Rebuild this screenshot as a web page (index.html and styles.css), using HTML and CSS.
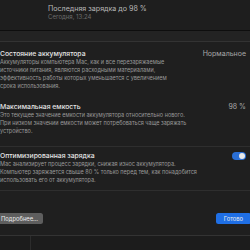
FILE: index.html
```html
<!DOCTYPE html>
<html lang="ru">
<head>
<meta charset="utf-8">
<link rel="stylesheet" href="styles.css">
</head>
<body>
<div class="page">
  <div class="behind-top">
    <div class="last-title">Последняя зарядка до 98 %</div>
    <div class="last-sub">Сегодня, 13:24</div>
  </div>
  <div class="sheet">
    <div class="sheet-head"></div>
    <div class="group">
      <div class="row row-first">
        <div class="row-text">
          <div class="row-title">Состояние аккумулятора</div>
          <div class="row-desc">Аккумуляторы компьютера Mac, как и все перезаряжаемые<br>источники питания, являются расходными материалами,<br>эффективность работы которых уменьшается с увеличением<br>срока использования.</div>
        </div>
        <div class="row-value">Нормальное</div>
      </div>
      <div class="row row-second">
        <div class="row-text">
          <div class="row-title">Максимальная емкость</div>
          <div class="row-desc">Это текущее значение емкости аккумулятора относительно нового.<br>При низком значении емкости может потребоваться чаще заряжать<br>устройство.</div>
        </div>
        <div class="row-value">98 %</div>
      </div>
    </div>
    <div class="group group-toggle">
      <div class="row row-third">
        <div class="row-text">
          <div class="row-title">Оптимизированная зарядка</div>
          <div class="row-desc">Mac анализирует процесс зарядки, снижая износ аккумулятора.<br>Компьютер заряжается свыше 80 % только перед тем, как понадобится<br>использовать его от аккумулятора.</div>
        </div>
        <div class="toggle"><span class="knob"></span></div>
      </div>
    </div>
    <div class="footer">
      <button class="btn btn-grey">Подробнее…</button>
      <button class="btn btn-blue">Готово</button>
    </div>
  </div>
  <div class="behind-bottom">
    <div class="sidebar"></div>
  </div>
</div>
</body>
</html>
```
FILE: styles.css
```css
html, body {
  margin: 0;
  padding: 0;
  background: #1e1e1e;
}
.page {
  width: 250px;
  height: 250px;
  overflow: hidden;
  font-family: "Inter", "Liberation Sans", sans-serif;
  display: flex;
  flex-direction: column;
}
.behind-top {
  height: 31px;
  box-sizing: border-box;
  padding: 4px 0 0 48px;
  background: #1e1e1e;
  border-bottom: 1px solid #0e0e0e;
}
.last-title {
  font-size: 7.1px;
  line-height: 9px;
  color: #b9b9b9;
}
.last-sub {
  font-size: 6px;
  line-height: 8px;
  color: #6c6c6c;
}
.sheet {
  background: #1f1f1f;
  display: flex;
  flex-direction: column;
}
.sheet-head {
  height: 10px;
  background: #232323;
  border-bottom: 1px solid #333;
}
.group {
  display: flex;
  flex-direction: column;
}
.group-toggle {
  border-top: 1px solid #2e2e2e;
  border-bottom: 1px solid #2e2e2e;
}
.row {
  display: flex;
  justify-content: space-between;
  align-items: flex-start;
  padding-right: 4px;
}
.row-first {
  padding-top: 6.5px;
}
.row-second {
  padding-top: 12px;
  padding-bottom: 11px;
}
.row-third {
  padding-top: 4.5px;
  padding-bottom: 6px;
}
.row-title {
  font-size: 6.8px;
  line-height: 9px;
  color: #e6e6e6;
  font-weight: 500;
}
.row-desc {
  font-size: 5.5px;
  line-height: 8px;
  color: #9a9a9a;
  white-space: nowrap;
}
.row-value {
  font-size: 7px;
  line-height: 9px;
  color: #a8a8a8;
}
.toggle {
  width: 14px;
  height: 8px;
  border-radius: 4px;
  background: #2a6fd6;
  margin-top: 1px;
  display: flex;
  justify-content: flex-end;
  align-items: center;
  padding: 0 1px;
  box-sizing: border-box;
}
.knob {
  width: 6px;
  height: 6px;
  border-radius: 50%;
  background: #e8e8e8;
}
.footer {
  height: 45px;
  box-sizing: border-box;
  padding-top: 22px;
  display: flex;
  justify-content: space-between;
  align-items: flex-start;
  border-bottom: 1px solid #333;
}
.btn {
  font-family: inherit;
  font-size: 5.8px;
  height: 11px;
  border: none;
  border-radius: 2.5px;
  color: #ececec;
  padding: 0 5px;
  line-height: 11px;
}
.btn-grey {
  background: #5e5e5e;
  margin-left: -4px;
}
.btn-blue {
  background: #1f6fe5;
  margin-right: -1px;
  padding: 0 8px;
}
.behind-bottom {
  flex: 1;
  background: #1c1c1c;
  display: flex;
}
.sidebar {
  width: 30px;
  border-right: 1px solid #2c2c2c;
}
```
